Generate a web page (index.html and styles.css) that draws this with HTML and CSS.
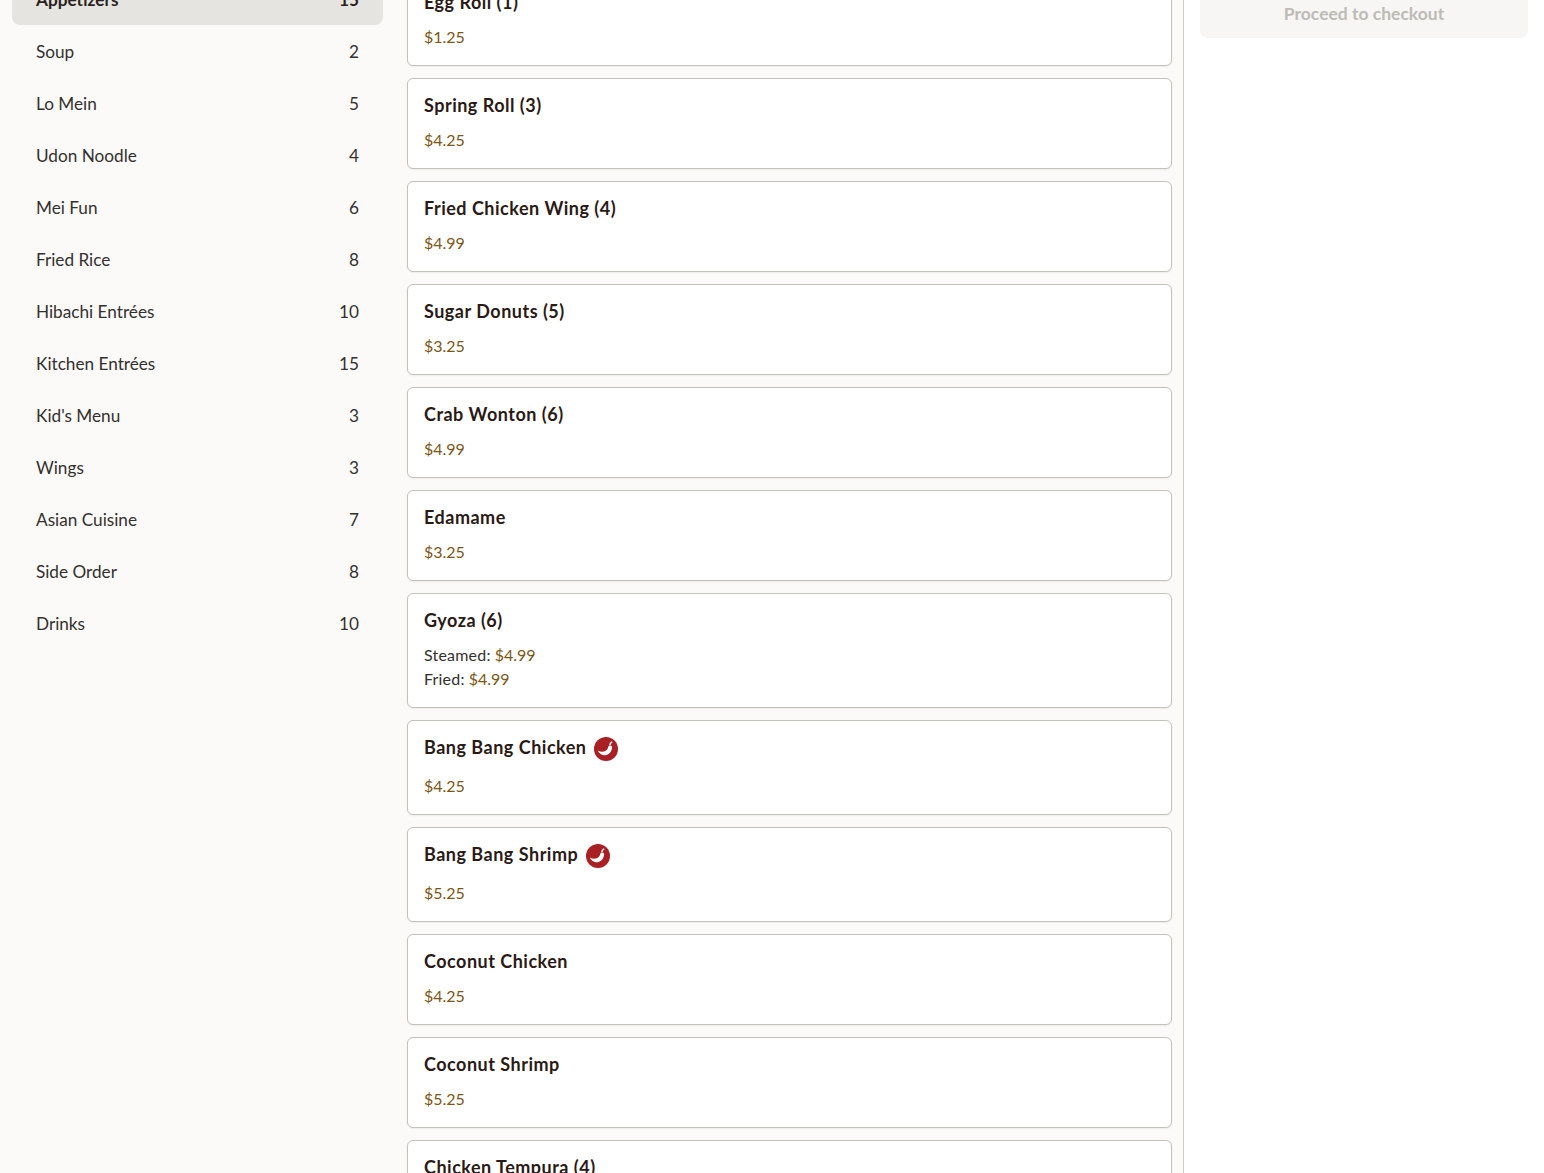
FILE: index.html
```html
<!DOCTYPE html>
<html lang="en">
<head>
<meta charset="utf-8">
<title>Menu</title>
<link rel="stylesheet" href="styles.css">
</head>
<body>
<div class="page">
  <nav class="sidebar">
    <a class="cat active"><span>Appetizers</span><span>15</span></a>
    <a class="cat"><span>Soup</span><span>2</span></a>
    <a class="cat"><span>Lo Mein</span><span>5</span></a>
    <a class="cat"><span>Udon Noodle</span><span>4</span></a>
    <a class="cat"><span>Mei Fun</span><span>6</span></a>
    <a class="cat"><span>Fried Rice</span><span>8</span></a>
    <a class="cat"><span>Hibachi Entrées</span><span>10</span></a>
    <a class="cat"><span>Kitchen Entrées</span><span>15</span></a>
    <a class="cat"><span>Kid's Menu</span><span>3</span></a>
    <a class="cat"><span>Wings</span><span>3</span></a>
    <a class="cat"><span>Asian Cuisine</span><span>7</span></a>
    <a class="cat"><span>Side Order</span><span>8</span></a>
    <a class="cat"><span>Drinks</span><span>10</span></a>
  </nav>
  <main class="menu">
    <article class="card"><h3 class="name">Egg Roll (1)</h3><p class="price">$1.25</p></article>
    <article class="card"><h3 class="name">Spring Roll (3)</h3><p class="price">$4.25</p></article>
    <article class="card"><h3 class="name">Fried Chicken Wing (4)</h3><p class="price">$4.99</p></article>
    <article class="card"><h3 class="name">Sugar Donuts (5)</h3><p class="price">$3.25</p></article>
    <article class="card"><h3 class="name">Crab Wonton (6)</h3><p class="price">$4.99</p></article>
    <article class="card"><h3 class="name">Edamame</h3><p class="price">$3.25</p></article>
    <article class="card"><h3 class="name">Gyoza (6)</h3><p class="price"><span class="opt">Steamed:</span> $4.99<br><span class="opt">Fried:</span> $4.99</p></article>
    <article class="card spicy"><h3 class="name"><span>Bang Bang Chicken</span>
      <svg class="chili" viewBox="0 0 24 24" aria-hidden="true"><circle cx="12" cy="12" r="12" fill="#a81f24"/><path d="M3.800 13.400c2.700 1.700 5.700 1.700 7.900.3 1.500-1 2.300-2.300 2.500-3.800.2-1 1.300-1.600 2.400-1.300 1 .3 1.700 1.200 1.500 2.300-.5 3.300-2.500 6-5.500 7.100-3.500 1.200-7.200-.9-8.800-4.600z" fill="#fff"/><path d="M15.200 8.200c0-1.700 .9-3.100 2.600-4l.8 1c-1.200.7-1.800 1.600-1.900 2.800z" fill="#fff"/></svg></h3><p class="price">$4.25</p></article>
    <article class="card spicy"><h3 class="name"><span>Bang Bang Shrimp</span>
      <svg class="chili" viewBox="0 0 24 24" aria-hidden="true"><circle cx="12" cy="12" r="12" fill="#a81f24"/><path d="M3.800 13.400c2.700 1.700 5.700 1.700 7.900.3 1.500-1 2.300-2.300 2.500-3.800.2-1 1.300-1.600 2.400-1.300 1 .3 1.700 1.200 1.500 2.300-.5 3.300-2.500 6-5.500 7.100-3.500 1.200-7.200-.9-8.800-4.600z" fill="#fff"/><path d="M15.200 8.200c0-1.700 .9-3.100 2.600-4l.8 1c-1.200.7-1.800 1.600-1.900 2.800z" fill="#fff"/></svg></h3><p class="price">$5.25</p></article>
    <article class="card"><h3 class="name">Coconut Chicken</h3><p class="price">$4.25</p></article>
    <article class="card"><h3 class="name">Coconut Shrimp</h3><p class="price">$5.25</p></article>
    <article class="card"><h3 class="name">Chicken Tempura (4)</h3><p class="price">$4.25</p></article>
  </main>
  <aside class="cart">
    <button class="checkout" disabled>Proceed to checkout</button>
  </aside>
</div>
</body>
</html>
```
FILE: styles.css
```css
html, body {
  margin: 0;
  height: 100%;
  overflow: hidden;
  background: #fff;
}
body {
  font-family: "Lato", "Open Sans", sans-serif;
  color: #2a1f1c;
}
.page {
  display: grid;
  grid-template-columns: 395px 789px 360px;
  margin-top: -27px;
  height: 1400px;
}
.sidebar {
  background: #fbfaf8;
  padding: 0 12px;
  display: flex;
  flex-direction: column;
}
.cat {
  box-sizing: border-box;
  display: flex;
  justify-content: space-between;
  align-items: center;
  height: 52px;
  padding: 1px 24px 0;
  font-size: 17.2px;
  color: #33302e;
  border-radius: 8px;
}
.cat.active {
  background: #e5e4e1;
  font-weight: 700;
  color: #2a1f1c;
}
.menu {
  background: #fbfaf8;
  border-right: 1px solid #cfccc6;
  padding: 2px 11px 0 12px;
  display: flex;
  flex-direction: column;
  gap: 12px;
}
.card {
  background: #fff;
  border: 1px solid #c4c1bc;
  border-radius: 6px;
  padding: 14px 16px 16px;
  box-shadow: 0 1px 2px rgba(0, 0, 0, .06);
}
.name {
  margin: 0;
  font-size: 18px;
  line-height: 24px;
  font-weight: 700;
  letter-spacing: .5px;
  color: #2a1a16;
}
.price {
  margin: 11px 0 0;
  font-size: 16px;
  line-height: 24px;
  color: #7a5716;
}
.opt {
  color: #33302e;
  letter-spacing: .2px;
}
.spicy .price {
  margin-top: 13px;
}
.chili {
  width: 24px;
  height: 24px;
  margin-left: 3px;
  vertical-align: -7px;
}
.cart {
  padding: 16px 16px 0;
}
.checkout {
  display: block;
  width: 100%;
  height: 49px;
  border: 0;
  border-radius: 8px;
  background: #f7f6f4;
  color: #bdbbb6;
  font: 700 17.5px "Lato", sans-serif;
  padding: 0;
}
```
